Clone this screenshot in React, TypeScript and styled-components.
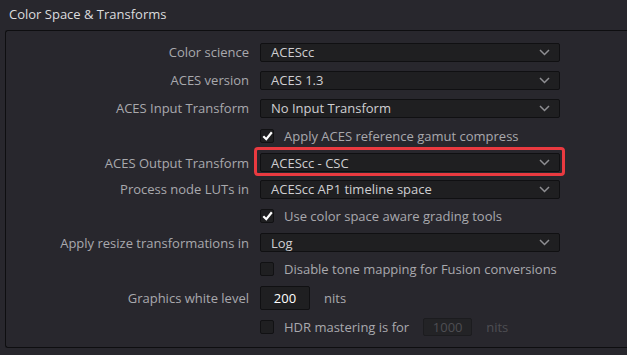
import styled, { createGlobalStyle } from 'styled-components';

const GlobalStyle = createGlobalStyle`
  html, body {
    margin: 0;
    padding: 0;
    background: #28272d;
  }
  body {
    font-family: "Open Sans", "Noto Sans", sans-serif;
    font-size: 13px;
    color: #a9a9ad;
    width: 627px;
    height: 355px;
    overflow: hidden;
  }
`;

const Page = styled.div`
  padding: 4px 0 0 5px;
`;

const Title = styled.div`
  color: #dcdcdf;
  font-size: 13px;
  height: 26px;
  line-height: 20px;
  padding-left: 4px;
`;

const Panel = styled.div`
  border: 1px solid #0e0e10;
  border-right: none;
  border-radius: 3px 0 0 3px;
  height: 318px;
  padding-top: 7px;
  box-sizing: border-box;
`;

const Row = styled.div<{ $h: number }>`
  display: grid;
  grid-template-columns: 243px 300px;
  column-gap: 11px;
  align-items: center;
  height: ${({ $h }) => $h}px;
`;

const Label = styled.div`
  text-align: right;
  white-space: nowrap;
`;

const Cell = styled.div`
  display: flex;
  align-items: center;
  grid-column: 2;
  white-space: nowrap;
`;

const Select = styled.div<{ $hl?: boolean }>`
  position: relative;
  height: 19px;
  box-sizing: border-box;
  border: 1px solid #101012;
  border-radius: 2px;
  background: #1f1f21;
  color: #cfcfd2;
  display: flex;
  align-items: center;
  justify-content: space-between;
  padding: 0 9px 0 10px;
  width: 300px;

  ${({ $hl }) =>
    $hl &&
    `
    &::after {
      content: '';
      position: absolute;
      left: -7px;
      right: -6px;
      top: -7px;
      bottom: -5px;
      border: 3px solid #ea3a40;
      border-radius: 4px;
    }
  `}
`;

const Box = styled.div`
  width: 14px;
  height: 14px;
  box-sizing: border-box;
  border: 1px solid #111113;
  border-radius: 2px;
  background: #1f1f21;
  display: flex;
  align-items: center;
  justify-content: center;
  margin-right: 10px;
`;

const NumInput = styled.div<{ $off?: boolean }>`
  box-sizing: border-box;
  width: ${({ $off }) => ($off ? 49 : 50)}px;
  height: ${({ $off }) => ($off ? 18 : 24)}px;
  border: 1px solid ${({ $off }) => ($off ? '#1c1c1f' : '#101012')};
  border-radius: 2px;
  background: ${({ $off }) => ($off ? '#232326' : '#1f1f21')};
  color: ${({ $off }) => ($off ? '#4e4e53' : '#ffffff')};
  display: flex;
  align-items: center;
  justify-content: center;
  margin-left: ${({ $off }) => ($off ? 14 : 0)}px;
`;

const Unit = styled.span<{ $off?: boolean }>`
  margin-left: 14px;
  color: ${({ $off }) => ($off ? '#4e4e53' : '#a9a9ad')};
`;

const Chevron = () => (
  <svg width="11" height="7" viewBox="0 0 11 7">
    <path d="M1 1l4.5 4.5L10 1" fill="none" stroke="#8e8e92" strokeWidth="1.5" />
  </svg>
);

const Tick = () => (
  <svg width="11" height="10" viewBox="0 0 11 10">
    <path d="M1.3 5.2l3 3L9.8 1.3" fill="none" stroke="#ffffff" strokeWidth="2.2" />
  </svg>
);

const Dropdown = ({ value, hl }: { value: string; hl?: boolean }) => (
  <Select $hl={hl}>
    <span>{value}</span>
    <Chevron />
  </Select>
);

const Check = ({ on, children }: { on?: boolean; children: React.ReactNode }) => (
  <Cell>
    <Box>{on && <Tick />}</Box>
    {children}
  </Cell>
);

export default function App() {
  return (
    <>
      <GlobalStyle />
      <Page>
        <Title>Color Space &amp; Transforms</Title>
        <Panel>
          <Row $h={28}>
            <Label>Color science</Label>
            <Dropdown value="ACEScc" />
          </Row>
          <Row $h={28}>
            <Label>ACES version</Label>
            <Dropdown value="ACES 1.3" />
          </Row>
          <Row $h={28}>
            <Label>ACES Input Transform</Label>
            <Dropdown value="No Input Transform" />
          </Row>
          <Row $h={28}>
            <Check on>Apply ACES reference gamut compress</Check>
          </Row>
          <Row $h={25}>
            <Label>ACES Output Transform</Label>
            <Dropdown value="ACEScc - CSC" hl />
          </Row>
          <Row $h={28}>
            <Label>Process node LUTs in</Label>
            <Dropdown value="ACEScc AP1 timeline space" />
          </Row>
          <Row $h={26}>
            <Check on>Use color space aware grading tools</Check>
          </Row>
          <Row $h={27}>
            <Label>Apply resize transformations in</Label>
            <Dropdown value="Log" />
          </Row>
          <Row $h={26}>
            <Check>Disable tone mapping for Fusion conversions</Check>
          </Row>
          <Row $h={32}>
            <Label>Graphics white level</Label>
            <Cell>
              <NumInput>200</NumInput>
              <Unit>nits</Unit>
            </Cell>
          </Row>
          <Row $h={26}>
            <Check>
              HDR mastering is for
              <NumInput $off>1000</NumInput>
              <Unit $off>nits</Unit>
            </Check>
          </Row>
        </Panel>
      </Page>
    </>
  );
}
